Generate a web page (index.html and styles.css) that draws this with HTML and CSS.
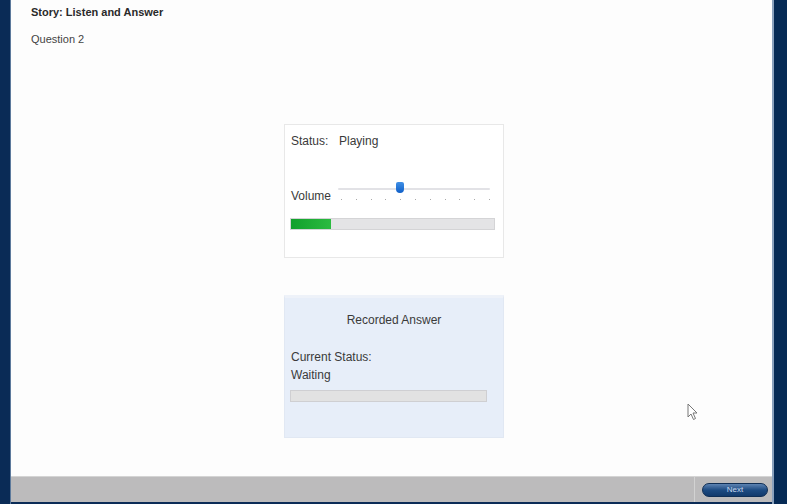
FILE: index.html
```html
<!DOCTYPE html>
<html lang="en">
<head>
  <meta charset="UTF-8">
  <title>Story: Listen and Answer</title>
  <link rel="stylesheet" href="styles.css">
</head>
<body>
  <div class="frame">
    <div class="edge left"></div>
    <div class="main">
      <div class="content">
        <div class="title">Story: Listen and Answer</div>
        <div class="question">Question 2</div>

        <div class="panels">
          <div class="box player">
            <div class="status-row"><span class="lbl">Status:</span><span>Playing</span></div>
            <div class="volume-row">
              <span class="vol-lbl">Volume</span>
              <div class="slider">
                <div class="track"></div>
                <div class="thumb"></div>
                <div class="ticks">
                  <i></i><i></i><i></i><i></i><i></i><i></i><i></i><i></i><i></i><i></i><i></i>
                </div>
              </div>
            </div>
            <div class="bar"><div class="fill" style="width:40px"></div></div>
          </div>

          <div class="box recorded">
            <div class="rec-title">Recorded Answer</div>
            <div class="rec-line">Current Status:</div>
            <div class="rec-line">Waiting</div>
            <div class="bar rec-bar"></div>
          </div>
        </div>

        <svg class="cursor" width="12" height="18" viewBox="0 0 12 18">
          <path d="M1 1 L1 14 L4 11 L6.5 16.5 L8.5 15.5 L6 10 L10 10 Z" fill="#fff" stroke="#777" stroke-width="1"/>
        </svg>
      </div>
      <div class="footer">
        <div class="divider"></div>
        <button class="next">Next</button>
      </div>
    </div>
    <div class="edge right"></div>
  </div>
</body>
</html>
```

FILE: styles.css
```css
body {
  margin: 0;
  background: #0b2c57;
  font-family: "Liberation Sans", Arial, sans-serif;
  color: #333;
}

.frame {
  display: grid;
  grid-template-columns: 11px 1fr 15px;
  height: 504px;
  background: #0b2c57;
}
.edge.left { background: #0a2b56; box-shadow: inset -1px 0 0 #5d7a9c; }
.edge.right { background: #062a55; box-shadow: inset 2px 0 0 #8aa1bd; }

.main {
  display: flex;
  flex-direction: column;
  background: #fdfdfd;
  margin-bottom: 2px;
}

.content {
  flex: 1;
  position: relative;
  padding: 5px 20px 0;
}
.title { font-size: 11px; font-weight: bold; line-height: 14px; color: #2a2a2a; }
.question { font-size: 11px; line-height: 14px; margin-top: 13px; color: #444; }

.panels {
  display: flex;
  flex-direction: column;
  gap: 37px;
  margin: 78px 0 0 253px;
  width: 220px;
}

.box { box-sizing: border-box; width: 220px; font-size: 12px; color: #3a3a3a; }

.player {
  height: 134px;
  border: 1px solid #e8e8e8;
  background: #fff;
  padding: 9px 8px 0 6px;
}
.status-row { line-height: 15px; }
.status-row .lbl { display: inline-block; width: 48px; }

.volume-row { display: flex; align-items: flex-start; margin-top: 29px; height: 40px; }
.vol-lbl { line-height: 15px; margin-top: 11px; }
.slider { position: relative; flex: 1; margin-left: 7px; margin-right: 5px; height: 30px; }
.track { position: absolute; left: 0; right: 0; top: 10px; height: 2px; background: #e2e2e6; border-radius: 1px; }
.thumb {
  position: absolute; left: 58px; top: 4px; width: 8px; height: 11px;
  background: linear-gradient(#3f8fe6, #0f5fc8);
  border-radius: 2px 2px 4px 4px;
}
.ticks { position: absolute; left: 3px; right: 0; top: 21px; display: flex; justify-content: space-between; }
.ticks i { width: 1px; height: 1px; background: #aaa; }

.bar {
  box-sizing: border-box;
  height: 12px;
  width: 205px;
  background: #e4e4e6;
  border: 1px solid #d4d4d6;
  margin-left: -1px;
}
.fill { height: 100%; background: linear-gradient(90deg, #12a02c, #2bbb40); }

.recorded {
  height: 143px;
  background: #e7eef9;
  border: 1px solid #e1e8f3;
  border-top: 3px solid #eef2f9;
  padding: 15px 6px 0 6px;
}
.rec-title { text-align: center; line-height: 15px; margin-bottom: 20px; }
.rec-line { line-height: 18px; }
.rec-bar { width: 197px; margin-top: 6px; background: #e2e2e2; border-color: #cfcfd2; }

.cursor { position: absolute; left: 676px; top: 403px; }

.footer {
  position: relative;
  height: 25px;
  background: #bcbbbc;
  border-top: 1px solid #d4d4d4;
  display: flex;
  justify-content: flex-end;
  align-items: center;
  padding-right: 4px;
}
.divider { position: absolute; left: 683px; top: 0; bottom: 0; width: 1px; background: #d2d2d2; }
.next {
  width: 66px;
  height: 14px;
  margin-top: 1px;
  border: 1px solid #0f2e55;
  border-radius: 7px;
  background: linear-gradient(#5d83b2, #1d4b82 50%, #123a6c);
  color: #c8d8ee;
  font-family: "Liberation Sans", Arial, sans-serif;
  font-size: 8px;
  padding: 0;
  line-height: 12px;
}
```
